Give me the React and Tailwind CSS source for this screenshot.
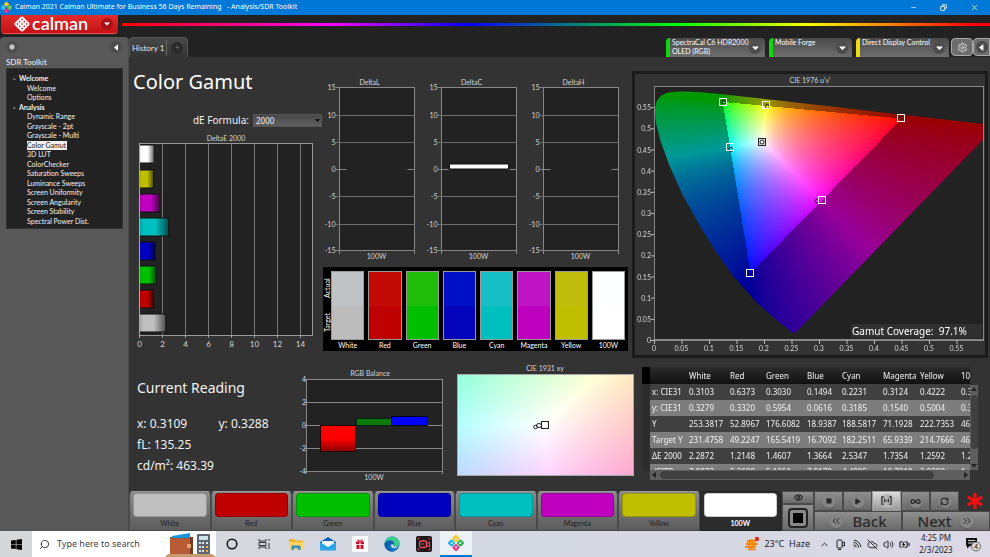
import React, { useEffect, useRef } from "react";
import {
  ChevronUp, ChevronsLeft, ChevronsRight, Search, Settings, RefreshCw, Infinity as InfinityIcon,
  Square, Play, Wifi, CloudOff, Volume2, BatteryCharging, Eye, Minus, X, Copy,
} from "lucide-react";

const UI = "font-['Noto_Sans',sans-serif]";

/* ---------- colour science helpers for the chromaticity charts ---------- */

const LOCUS_XY = [
  [0.1741, 0.005], [0.1714, 0.0051], [0.1644, 0.0109], [0.1566, 0.0177], [0.144, 0.0297],
  [0.1241, 0.0578], [0.1096, 0.0868], [0.0913, 0.1327], [0.0687, 0.2007], [0.0454, 0.295],
  [0.0235, 0.4127], [0.0082, 0.5384], [0.0039, 0.6548], [0.0139, 0.7502], [0.0389, 0.812],
  [0.0743, 0.8338], [0.1142, 0.8262], [0.1547, 0.8059], [0.2296, 0.7543], [0.3016, 0.6923],
  [0.3731, 0.6245], [0.4441, 0.5547], [0.5125, 0.4866], [0.5752, 0.4242], [0.627, 0.3725],
  [0.6658, 0.334], [0.6915, 0.3083], [0.719, 0.2809], [0.7347, 0.2653],
];

const PLOT = { x: 654, y: 86, w: 330, h: 254 };
const toX = (u) => PLOT.x + (u / 0.6) * PLOT.w;
const toY = (v) => PLOT.y + PLOT.h - (v / 0.6) * PLOT.h;

const locusPoints = LOCUS_XY.map(([x, y]) => {
  const d = -2 * x + 12 * y + 3;
  return `${toX((4 * x) / d).toFixed(2)},${toY((9 * y) / d).toFixed(2)}`;
}).join(" ");

function xyToRgb(x, y, gamma) {
  const X = x / y;
  const Z = (1 - x - y) / y;
  const rgb = [
    3.2406 * X - 1.5372 - 0.4986 * Z,
    -0.9689 * X + 1.8758 + 0.0415 * Z,
    0.0557 * X - 0.204 + 1.057 * Z,
  ];
  const outside = Math.min(...rgb) < 0;
  const top = Math.max(...rgb);
  const scale = outside ? 153 : 255;
  return rgb.map((c) => Math.pow(Math.max(c, 0) / top, 1 / gamma) * scale);
}

function Chromaticity({ width, height, locate, gamma }) {
  const ref = useRef(null);
  useEffect(() => {
    const ctx = ref.current.getContext("2d");
    const image = ctx.createImageData(width, height);
    for (let j = 0; j < height; j++) {
      for (let i = 0; i < width; i++) {
        const [x, y] = locate((i + 0.5) / width, 1 - (j + 0.5) / height);
        const [r, g, b] = xyToRgb(x, y, gamma);
        image.data.set([r, g, b, 255], (j * width + i) * 4);
      }
    }
    ctx.putImageData(image, 0, 0);
  }, [width, height, locate, gamma]);
  return <canvas ref={ref} width={width} height={height} className="block h-full w-full" />;
}

const locateUv = (s, t) => {
  const u = s * 0.6;
  const v = t * 0.6;
  const d = 6 * u - 16 * v + 12;
  return [(9 * u) / d, (4 * v) / d];
};
const locateXy = (s, t) => [0.2707 + s * 0.084, 0.287 + t * 0.084];

/* ---------- top chrome ---------- */

function CalmanMark({ className }) {
  return (
    <svg viewBox="0 0 20 20" className={className}>
      <g transform="rotate(45 10 10)">
        <rect x="2" y="2" width="7.5" height="7.5" rx="2" fill="#f5c518" />
        <rect x="10.5" y="2" width="7.5" height="7.5" rx="2" fill="#6cc644" />
        <rect x="2" y="10.5" width="7.5" height="7.5" rx="2" fill="#2ec4e8" />
        <rect x="10.5" y="10.5" width="7.5" height="7.5" rx="2" fill="#e8308a" />
      </g>
    </svg>
  );
}

function TitleBar() {
  return (
    <header className={`flex h-[15px] items-center bg-[#0078d7] pl-px text-[7px] text-white ${UI}`}>
      <CalmanMark className="mr-[3px] size-[11px]" />
      <span className="flex-1 whitespace-pre">Calman 2021 Calman Ultimate for Business 56 Days Remaining   - Analysis/SDR Toolkit</span>
      <button aria-label="Minimize" className="flex w-[30px] justify-center"><Minus size={7} strokeWidth={2} /></button>
      <button aria-label="Restore" className="flex w-[30px] justify-center"><Copy size={7} strokeWidth={3} className="-scale-x-100" /></button>
      <button aria-label="Close" className="flex w-[32px] justify-center"><X size={9} strokeWidth={2} /></button>
    </header>
  );
}

function BrandRow() {
  return (
    <div className="flex h-[22px] items-start bg-[#222]">
      <button className="ml-px flex h-[19px] w-[117px] items-center rounded-b border-b border-[#ff8080]/50 bg-linear-to-b from-[#e02b2b] to-[#c40f14] pl-[13px] text-white">
        <svg viewBox="0 0 30 30" className="size-[16px]" fill="none" stroke="white" strokeWidth="2.2">
          <g transform="rotate(45 15 15)">
            {[6, 12, 18].map((cy) => [6, 12, 18].map((cx) => <circle key={`${cx}-${cy}`} cx={cx + 3} cy={cy + 3} r="2.7" />))}
            <rect x="5" y="5" width="20" height="20" rx="3" />
          </g>
        </svg>
        <span className="ml-[2px] pb-[2px] font-['Lato',sans-serif] text-[18px] font-semibold leading-[16px]">calman</span>
        <span className="ml-auto mr-[5px] flex size-[12px] items-center justify-center rounded-full bg-[#a81015]">
          <svg viewBox="0 0 6 4" className="w-[6px]"><path d="M0 .5h6L3 3.5z" fill="white" /></svg>
        </span>
      </button>
      <div className="ml-1 mt-2 h-[3px] flex-1 bg-[linear-gradient(90deg,#f00_0%,#f0f_24%,#00f_40%,#0f0_64%,#ff0_79%,#f00_98%)]" />
    </div>
  );
}

const TREE = [
  ["Welcome", 0], ["Welcome", 1], ["Options", 1], ["Analysis", 0], ["Dynamic Range", 1], ["Grayscale - 2pt", 1],
  ["Grayscale - Multi", 1], ["Color Gamut", 1, true], ["3D LUT", 1], ["ColorChecker", 1], ["Saturation Sweeps", 1],
  ["Luminance Sweeps", 1], ["Screen Uniformity", 1], ["Screen Angularity", 1], ["Screen Stability", 1], ["Spectral Power Dist.", 1],
];

function Sidebar() {
  return (
    <aside className="w-[129px] shrink-0 rounded-t border-r border-[#4a4a4a] bg-[#585858] px-[6px] pt-[3px] text-[#f2f2f2]">
      <div className="flex h-[14px] items-center justify-between">
        <button aria-label="Options" className="flex size-[12px] items-center justify-center rounded-full bg-radial from-[#ccc] from-20% to-[#4d4d4d] to-40%" />
        <button aria-label="Collapse" className="flex size-[12px] items-center justify-center rounded-full bg-[#4b4b4b]">
          <svg viewBox="0 0 5 8" className="h-[7px]"><path d="M5 0v8L0 4z" fill="white" /></svg>
        </button>
      </div>
      <h2 className="mt-[2px] h-[12px] text-[8px] leading-[12px]">SDR Toolkit</h2>
      <ul className="grid h-[161px] w-[117px] auto-rows-fr border border-[#333] bg-[#222] pb-[2px] pt-[5px] text-[7px] leading-none">
        {TREE.map(([label, depth, active], i) => (
          <li key={i} className={depth ? "flex items-center pl-[20px]" : "flex items-center pl-[6px] font-bold"}>
            {!depth && <span className="mr-1 w-[2px] text-[5px] text-[#777]">▴</span>}
            <a href="#" className={active ? "bg-[#f0f0f0] py-px pr-px text-[#222]" : ""}>{label}</a>
          </li>
        ))}
      </ul>
    </aside>
  );
}

function Device({ lines, color, width }) {
  return (
    <button className={`flex h-[19px] shrink-0 items-start rounded-t-sm border-l-4 bg-linear-to-b from-[#4a4a4a] to-[#6e6e6e] pl-[2px] text-left text-[7px] leading-[9px] text-white ${color} ${width}`}>
      <span className="flex-1 whitespace-nowrap">{lines.map((l) => <span key={l} className="block">{l}</span>)}</span>
      <span className="mr-1 mt-1 flex size-[12px] items-center justify-center rounded-full bg-[#4c4c4c]">
        <svg viewBox="0 0 6 4" className="w-[7px]"><path d="M0 .5h6L3 3.5z" fill="white" /></svg>
      </span>
    </button>
  );
}

function TabStrip() {
  return (
    <div className="flex h-[20px] items-end justify-between overflow-hidden bg-[#222]">
      <div className="flex h-full items-center rounded-t border border-b-0 border-[#555] bg-linear-to-b from-[#484848] to-[#333] text-[8px] text-[#e6e6e6]">
        <button className="h-[16px] border-r border-[#666] pl-[2px] pr-[2px]">History 1</button>
        <button aria-label="Add tab" className="mx-1 size-[12px] rounded-full bg-[#2b2b2b] text-[7px] leading-none text-[#888]">+</button>
      </div>
      <div className="flex h-[19px] items-start">
        <div className="flex gap-1">
          <Device lines={["SpectraCal C6 HDR2000", "OLED (RGB)"]} color="border-l-[#12d512]" width="w-[99px]" />
          <Device lines={["Mobile Forge"]} color="border-l-[#12d512]" width="w-[83px]" />
          <Device lines={["Direct Display Control"]} color="border-l-[#ecdc14]" width="w-[93px]" />
        </div>
        <button aria-label="Settings" className="ml-[2px] flex h-[18px] w-[22px] items-center justify-center rounded-sm border border-[#aaa] bg-[#6d6d6d] text-[#e0e0e0]"><Settings size={11} /></button>
        <button aria-label="Show panel" className="flex h-[18px] w-[17px] items-center justify-center rounded-l-sm border border-[#aaa] bg-[#6d6d6d]">
          <span className="flex size-[12px] items-center justify-center rounded-full bg-[#4b4b4b]"><svg viewBox="0 0 5 8" className="h-[7px]"><path d="M5 0v8L0 4z" fill="white" /></svg></span>
        </button>
      </div>
    </div>
  );
}

/* ---------- charts ---------- */

const label = "fill-[#d6d6d6] font-['Lato',sans-serif] text-[7px]";

const DELTA_E = [
  ["#ffffff", 1.27, 145], ["#bfbf00", 1.22, 170], ["#c000c0", 1.74, 194], ["#00bfbf", 2.53, 218],
  ["#0000c4", 1.37, 242], ["#00c000", 1.46, 266], ["#c00000", 1.21, 290], ["#bfbfbf", 2.29, 314],
];

function DeltaEChart() {
  return (
    <svg viewBox="129 130 194 222" className="block w-full" role="img" aria-label="DeltaE 2000">
      <defs>
        <linearGradient id="edge">
          <stop offset="0" stopColor="#000" stopOpacity=".15" /><stop offset=".15" stopColor="#000" stopOpacity="0" />
          <stop offset=".55" stopColor="#000" stopOpacity="0" /><stop offset="1" stopColor="#000" stopOpacity=".6" />
        </linearGradient>
      </defs>
      <text x="226" y="141" textAnchor="middle" className={label}>DeltaE 2000</text>
      <rect x="139.5" y="143.5" width="173" height="192" fill="#222" stroke="#999" />
      {[2, 4, 6, 8, 10, 12, 14].map((n) => <line key={n} x1={139.5 + n * 11.5} x2={139.5 + n * 11.5} y1="144" y2="335" stroke="#777" />)}
      {[0, 2, 4, 6, 8, 10, 12, 14].map((n) => (
        <g key={n}>
          <line x1={139.5 + n * 11.5} x2={139.5 + n * 11.5} y1="335" y2="338" stroke="#999" />
          <text x={139.5 + n * 11.5} y="347" textAnchor="middle" className="fill-[#d6d6d6] font-['Lato',sans-serif] text-[8px]">{n}</text>
        </g>
      ))}
      {DELTA_E.map(([fill, value, y]) => (
        <g key={y}>
          <rect x="139.5" y={y} width={value * 11.5} height="18" fill={fill} />
          <rect x="139.5" y={y} width={value * 11.5} height="18" fill="url(#edge)" stroke="#111" />
        </g>
      ))}
      <line x1="139.5" x2="139.5" y1="143" y2="338" stroke="#aaa" />
    </svg>
  );
}

function DeltaCharts() {
  const rows = [[15, 87], [10, 115], [5, 142], [0, 169], [-5, 196], [-10, 224], [-15, 250]];
  return (
    <svg viewBox="323 75 309 188" className="block w-full" role="img" aria-label="DeltaL, DeltaC and DeltaH">
      {["DeltaL", "DeltaC", "DeltaH"].map((title, i) => {
        const x = 339.5 + i * 102;
        return (
          <g key={title}>
            <text x={x + 30} y="85" textAnchor="middle" className={label}>{title}</text>
            <rect x={x} y="87.5" width="75" height="163" fill="#222" stroke="#888" />
            {rows.map(([n, y]) => (
              <g key={n}>
                <line x1={x - 4} x2={n === 0 ? x + 7 : x + 75} y1={y + 0.5} y2={y + 0.5} stroke={n === 0 || n === -15 || n === 15 ? "#888" : "#6e6e6e"} />
                <text x={x - 4} y={y + 3} textAnchor="end" className={label}>{n}</text>
              </g>
            ))}
            <line x1={x + 68} x2={x + 75} y1="169.5" y2="169.5" stroke="#888" />
            {title === "DeltaC" && <rect x={x + 8} y="164" width="59" height="5" fill="#fff" stroke="#111" />}
            <path d={`M${x} 251v3M${x + 75} 251v3`} stroke="#888" />
            <text x={x + 37} y="259" textAnchor="middle" className={label}>100W</text>
          </g>
        );
      })}
    </svg>
  );
}

const SWATCHES = [
  ["White", "bg-[#bfc3c5]", "bg-[#bcbcbc]"], ["Red", "bg-[#c40a04]", "bg-[#bf0000]"], ["Green", "bg-[#22bf0a]", "bg-[#00bf00]"],
  ["Blue", "bg-[#0010c4]", "bg-[#0404bb]"], ["Cyan", "bg-[#16bfc5]", "bg-[#00bfbf]"], ["Magenta", "bg-[#bf14c4]", "bg-[#bf00bf]"],
  ["Yellow", "bg-[#c1bd0c]", "bg-[#bfbf00]"], ["100W", "bg-[#fcffff]", "bg-[#ffffff]"],
];

function SwatchPanel() {
  return (
    <div className="mr-1 mt-1 flex h-[84px] bg-black pr-[3px] pt-1 text-[7px] text-white">
      <div className="flex h-[68px] w-2 rotate-180 flex-row justify-around text-center leading-[8px] [writing-mode:vertical-rl]">
        <span>Target</span><span>Actual</span>
      </div>
      <div className="grid flex-1 grid-cols-8 gap-1">
        {SWATCHES.map(([name, actual, target]) => (
          <div key={name} className="text-center leading-[11px]">
            <div className="flex h-[69px] flex-col border border-[#999]">
              <span className={`flex-1 ${actual}`} /><span className={`flex-1 ${target}`} />
            </div>
            {name}
          </div>
        ))}
      </div>
    </div>
  );
}

const MARKS = [[723, 102, 724, 102], [766, 105, 767.5, 106.5], [901.5, 118.5, 900, 118], [730, 147.5, 731, 149.5], [822, 200, 817, 201], [750, 273, 748, 271]];
const STEPS = [0, 0.05, 0.1, 0.15, 0.2, 0.25, 0.3, 0.35, 0.4, 0.45, 0.5, 0.55];

function Cie1976() {
  return (
    <div className="mr-[2px] mt-[14px] border-[3px] border-[#1b1b1b]">
      <svg viewBox="635 74 350 281" className="block w-full" role="img" aria-label="CIE 1976 u'v'">
        <clipPath id="locus"><polygon points={locusPoints} /></clipPath>
        <clipPath id="plot"><rect x={PLOT.x} y={PLOT.y} width={PLOT.w} height={PLOT.h} /></clipPath>
        <text x="810" y="83" textAnchor="middle" className={label}>CIE 1976 u'v'</text>
        <rect x="654.5" y="86.5" width="329" height="253" fill="#222" stroke="#888" />
        <g clipPath="url(#plot)">
          <g clipPath="url(#locus)">
            <foreignObject x={PLOT.x} y={PLOT.y} width={PLOT.w} height={PLOT.h}>
              <Chromaticity width={330} height={254} locate={locateUv} gamma={1.5} />
            </foreignObject>
          </g>
        </g>
        <path d="M654.5 86v257M654 340.5h330M983.5 86v254" stroke="#888" fill="none" />
        {STEPS.map((n) => (
          <g key={n}>
            <line x1={toX(n) + 0.5} x2={toX(n) + 0.5} y1="340" y2="344" stroke="#bbb" />
            <line x1="651" x2="654" y1={toY(n) + 0.5} y2={toY(n) + 0.5} stroke="#bbb" />
            <text x={toX(n)} y="351" textAnchor="middle" className={label}>{n}</text>
            <text x="651" y={toY(n) + 3} textAnchor="end" className={label}>{n}</text>
          </g>
        ))}
        <rect x="851" y="324" width="131" height="14" fill="#303030" />
        <text x="852" y="335" className="fill-white font-['Noto_Sans',sans-serif] text-[10px] whitespace-pre">Gamut Coverage:  97.1%</text>
        {MARKS.map(([x, y, cx, cy]) => (
          <g key={x} fill="none">
            <circle cx={cx} cy={cy} r="2" stroke="#222" />
            <rect x={Math.floor(x) - 3.5} y={Math.floor(y) - 3.5} width="7" height="7" stroke="#f4f4f4" />
          </g>
        ))}
        <rect x="758.5" y="138.5" width="7" height="7" fill="#ddd" stroke="#222" />
        <circle cx="762" cy="142" r="2" fill="#fff" stroke="#222" />
      </svg>
    </div>
  );
}

function RgbBalance() {
  return (
    <svg viewBox="300 358 152 130" className="block w-full" role="img" aria-label="RGB Balance">
      <defs>
        <linearGradient id="redbar" x2="0" y2="1"><stop offset=".5" stopColor="#f00" /><stop offset="1" stopColor="#800" /></linearGradient>
      </defs>
      <text x="370" y="376" textAnchor="middle" className={label}>RGB Balance</text>
      <rect x="306.5" y="379.5" width="136" height="92" fill="#222" stroke="#888" />
      {[4, 2, 0, -2, -4].map((n, i) => (
        <g key={n}>
          <line x1="304" x2="442" y1={379.5 + i * 23} y2={379.5 + i * 23} stroke="#888" />
          <text x="306" y={382 + i * 23} textAnchor="end" className={label}>{n}</text>
        </g>
      ))}
      <path d="M306.5 471v3M442.5 471v3" stroke="#888" />
      <rect x="320.5" y="425.5" width="35" height="26" fill="url(#redbar)" stroke="#200" />
      <rect x="356.5" y="418.5" width="35" height="7" fill="#0a7a0a" stroke="#021" />
      <rect x="391.5" y="416.5" width="36" height="9" fill="#00f" stroke="#002" />
      <text x="374" y="480" textAnchor="middle" className={label}>100W</text>
    </svg>
  );
}

function Cie1931() {
  return (
    <svg viewBox="452 358 184 130" className="block w-full" role="img" aria-label="CIE 1931 xy">
      <text x="545" y="371" textAnchor="middle" className={label}>CIE 1931 xy</text>
      <foreignObject x="457" y="374" width="177" height="102">
        <Chromaticity width={177} height={102} locate={locateXy} gamma={2.2} />
      </foreignObject>
      <rect x="457.5" y="374.5" width="176" height="101" fill="none" stroke="#aaa" />
      <g fill="none" stroke="#222">
        <circle cx="535.5" cy="427" r="1.8" /><ellipse cx="539" cy="425.5" rx="2.5" ry="2" />
        <rect x="541.5" y="421.5" width="7" height="7" />
      </g>
    </svg>
  );
}

const COLUMNS = ["", "White", "Red", "Green", "Blue", "Cyan", "Magenta", "Yellow", "100W"];
const READINGS = [
  ["x: CIE31", "0.3103", "0.6373", "0.3030", "0.1494", "0.2231", "0.3124", "0.4222", "0.3109"],
  ["y: CIE31", "0.3279", "0.3320", "0.5954", "0.0616", "0.3185", "0.1540", "0.5004", "0.3288"],
  ["Y", "253.3817", "52.8967", "176.6082", "18.9387", "188.5817", "71.1928", "222.7353", "463.39"],
  ["Target Y", "231.4758", "49.2247", "165.5419", "16.7092", "182.2511", "65.9339", "214.7666", "463.39"],
  ["ΔE 2000", "2.2872", "1.2148", "1.4607", "1.3664", "2.5347", "1.7354", "1.2592", "1.27"],
  ["dEITP", "7.9872", "5.2689", "5.1261", "7.9179", "4.4985", "10.7019", "3.9388", "1."],
];
const WIDTHS = ["w-[37px]", "w-[41px]", "w-[36px]", "w-[41px]", "w-[35px]", "w-[41px]", "w-[37px]", "w-[41px]", "w-[40px]"];

function DataTable() {
  return (
    <div className={`ml-[6px] mr-[12px] mt-[9px] flex min-w-0 items-start text-[8px] text-[#f2f2f2] ${UI}`}>
      <div className="w-2 shrink-0 bg-[#2c2c2c]"><div className="h-[17px] bg-black" /><div className="h-[86px]" /></div>
      <div className="min-w-0 flex-1">
        <div className="h-[103px] overflow-hidden">
          <table className="w-[349px] table-fixed border-collapse whitespace-nowrap text-left">
            <thead>
              <tr className="h-[17px] bg-linear-to-b from-[#2c2c2c] to-[#111]">
                {COLUMNS.map((c, i) => <th key={i} scope="col" className={`p-0 pl-[2px] font-normal ${WIDTHS[i]}`}>{c}</th>)}
              </tr>
            </thead>
            <tbody>
              {READINGS.map((row) => (
                <tr key={row[0]} className="h-[16px] odd:bg-[#404040] even:bg-[#7d7d7d]">
                  {row.map((v, i) => (i ? <td key={i} className="p-0 pl-[2px]">{v}</td> : <th key={i} scope="row" className="p-0 pl-[2px] font-normal">{v}</th>))}
                </tr>
              ))}
            </tbody>
          </table>
        </div>
        <div className="flex h-[10px] items-center bg-[#5e5e5e] px-[2px]">
          <svg viewBox="0 0 4 6" className="h-[6px]"><path d="M4 0v6L0 3z" fill="#222" /></svg>
          <div className="ml-1 h-2 w-[274px] rounded-full bg-[#404040]" />
          <svg viewBox="0 0 4 6" className="ml-auto h-[6px]"><path d="M0 0v6l4-3z" fill="#222" /></svg>
        </div>
      </div>
      <div className="mt-[18px] flex h-[85px] w-2 shrink-0 flex-col items-center justify-between bg-[#5e5e5e] py-[2px]">
        <svg viewBox="0 0 6 4" className="w-[6px]"><path d="M0 4h6L3 0z" fill="#222" /></svg>
        <div className="mb-auto mt-1 h-[54px] w-[7px] rounded-full bg-[#404040]" />
        <svg viewBox="0 0 6 4" className="w-[6px]"><path d="M0 0h6L3 4z" fill="#222" /></svg>
      </div>
    </div>
  );
}

function CurrentReading() {
  return (
    <section className={`min-w-0 pl-2 pt-[20px] text-[12px] leading-[21px] text-[#f2f2f2] ${UI}`}>
      <h2 className="mb-[15px] text-[14px] leading-[20px]">Current Reading</h2>
      <div className="grid grid-cols-2"><p>x: 0.3109</p><p>y: 0.3288</p></div>
      <p>fL: 135.25</p>
      <p>cd/m²: 463.39</p>
    </section>
  );
}

/* ---------- pattern and transport bar ---------- */

const PATTERNS = [
  ["White", "bg-[#bfbfbf]"], ["Red", "bg-[#bf0000]"], ["Green", "bg-[#00bf00]"], ["Blue", "bg-[#0000bf]"],
  ["Cyan", "bg-[#00bfbf]"], ["Magenta", "bg-[#bf00bf]"], ["Yellow", "bg-[#bfbf00]"], ["100W", "bg-white", true],
];

const key = "flex items-center justify-center border border-[#4a4a4a] bg-linear-to-b from-[#8f8f8f] to-[#6a6a6a] text-[#2a2a2a]";
const knob = "flex size-[14px] items-center justify-center rounded-full bg-[#858585] shadow";

function PatternBar() {
  return (
    <div className="mt-auto flex h-[40px]">
      <div className="grid flex-1 grid-cols-8">
        {PATTERNS.map(([name, color, active]) => (
          <button
            key={name}
            className={active
              ? "rounded-t-sm border border-[#222] bg-[#2c2c2c] px-[3px] text-[7px] font-bold leading-[12px] text-white"
              : "rounded-t-sm border border-[#4a4a4a] border-t-[#999] bg-linear-to-b from-[#8a8a8a] to-[#5c5c5c] px-[3px] text-[7px] leading-[12px] text-[#1f1f1f]"}
          >
            <span className={`block h-[24px] rounded-sm border border-black/20 ${color}`} />
            {name}
          </button>
        ))}
      </div>
      <div className="flex w-[33px] flex-col border-l border-[#333]">
        <button aria-label="Preview" className={`${key} h-[13px]`}><Eye size={9} strokeWidth={3} /></button>
        <button aria-label="Pattern window" className={`${key} flex-1`}>
          <span className="flex size-[20px] items-center justify-center rounded-sm border-2 border-[#222] bg-[#888]"><span className="size-[10px] bg-black" /></span>
        </button>
      </div>
      <div className="flex w-[176px] flex-col">
        <div className="flex h-[20px]">
          <button aria-label="Stop" className={`${key} w-[29px]`}><span className={knob}><Square size={6} fill="currentColor" /></span></button>
          <button aria-label="Play" className={`${key} w-[29px]`}><span className={knob}><Play size={7} fill="currentColor" /></span></button>
          <button aria-label="Read series" className="flex w-[29px] items-center justify-center border border-[#999] bg-linear-to-b from-[#ddd] to-[#999]">
            <span className="flex size-[14px] items-center justify-center rounded-full bg-[#b5b5b5]">
              <svg viewBox="0 0 12 10" className="w-[11px]" fill="none" stroke="#222" strokeWidth="1.2"><path d="M3 1H1v8h2M9 1h2v8H9M4 3v4M8 3v4M5.500 5h1" /></svg>
            </span>
          </button>
          <button aria-label="Continuous" className={`${key} w-[29px]`}><span className={knob}><InfinityIcon size={11} strokeWidth={3} /></span></button>
          <button aria-label="Refresh" className={`${key} w-[29px]`}><span className={knob}><RefreshCw size={9} strokeWidth={3} /></span></button>
          <div className="flex flex-1 items-center justify-center">
            <svg viewBox="0 0 20 20" className="size-[18px]" stroke="#f01010" strokeWidth="3.6"><path d="M10 1v18M2 5.5l16 9M18 5.5l-16 9" /></svg>
          </div>
        </div>
        <div className={`flex h-[20px] text-[15px] font-medium leading-none ${UI}`}>
          <button className={`${key} flex-1 gap-[9px]`}><span className={knob}><ChevronsLeft size={12} /></span>Back</button>
          <button className={`${key} flex-1 gap-[9px]`}>Next<span className={knob}><ChevronsRight size={12} /></span></button>
        </div>
      </div>
    </div>
  );
}

/* ---------- Windows task bar ---------- */

function TaskIcon({ name, children, active }) {
  return (
    <button aria-label={name} className={active ? "flex w-8 items-center justify-center border-b-2 border-[#0078d7] bg-[#eef1f5]" : "flex w-8 items-center justify-center"}>
      <svg viewBox="0 0 16 16" className="size-[16px]">{children}</svg>
    </button>
  );
}

function TaskBar() {
  return (
    <footer className={`flex h-[26px] items-stretch bg-linear-to-r from-[#d6d7da] via-[#d3d8e3] to-[#dcd8e6] text-[#1b1b1b] ${UI}`}>
      <button aria-label="Start" className="flex w-8 items-center justify-center">
        <svg viewBox="0 0 12 12" className="size-[11px]"><path d="M0 1.7 5.2 1v4.6H0zM5.9.9 12 0v5.6H5.9zM0 6.3h5.2v4.7L0 10.3zM5.9 6.3H12V12l-6.1-.9z" /></svg>
      </button>
      <label className="flex w-[184px] items-center bg-white pl-[7px]">
        <Search size={11} strokeWidth={1.8} className="-scale-x-100" />
        <input aria-label="Search" placeholder="Type here to search" className="ml-[7px] w-[108px] bg-transparent text-[9px] outline-none placeholder:text-[#444]" />
        <svg viewBox="0 0 51 25" className="h-[25px] w-[51px]">
          <path d="M0 25l3-3h44l4 3z" fill="#c89a70" />
          <path d="M5 5h22v17H5z" fill="#a9502c" /><path d="M7 4l18-3v5H7z" fill="#1a95d8" /><path d="M5 7h20v15H5z" fill="#b85c35" /><path d="M25 5h3v17h-3z" fill="#7e371d" />
          <path d="M22 12h4v4h-4z" fill="#e0a070" />
          <rect x="32" y="2" width="13" height="20" rx="1" fill="#5d6570" /><rect x="34" y="4" width="9" height="4" fill="#cfe0e8" />
          {[10, 14, 18].map((y) => [34, 37, 41].map((x) => <rect key={`${x}${y}`} x={x} y={y} width="2" height="2" fill={x === 41 && y > 12 ? "#f5b041" : "#dfe4e8"} />))}
        </svg>
      </label>
      <TaskIcon name="Cortana"><circle cx="8" cy="8" r="4.8" fill="none" stroke="#111" strokeWidth="1.5" /></TaskIcon>
      <TaskIcon name="Task view"><path d="M3 3v2h7V3M3 13v-2h7v2M3 6.5h7v3H3zM13 3v2M13 7v6" fill="none" stroke="#333" /></TaskIcon>
      <TaskIcon name="File Explorer"><path d="M1 3h5l1.5 1.5H15V13H1z" fill="#f0b429" /><path d="M1 6h14v7.5H1z" fill="#ffd35c" /><path d="M3.5 14V9.5h9V14h-2.5v-2H6v2z" fill="#2f8ed8" /></TaskIcon>
      <TaskIcon name="Mail"><path d="M0 6l8-5 8 5v8H0z" fill="#0a64ad" /><path d="M2 5h12v6H2z" fill="#fff" /><path d="M0 6l8 5 8-5v8.500H0z" fill="#2aa5e8" /></TaskIcon>
      <TaskIcon name="Gifts"><path d="M0 0h16v16H0z" fill="#fff" /><path d="M4 5.500h3.500V8H4zM8.500 5.500H12V8H8.500zM4.500 8.700h3V13h-3zM8.500 8.700h3V13h-3z" fill="#c8102e" /><path d="M8 5.500C4 5 5.500 2 8 5.500 10.500 2 12 5 8 5.500" fill="none" stroke="#c8102e" /></TaskIcon>
      <TaskIcon name="Edge">
        <circle cx="8" cy="8" r="7.600" fill="#1479c9" /><path d="M.5 8C1 3.500 4 .4 8 .4c4.500 0 7.600 3 7.600 6.600 0 2.500-2 3.700-4 3.700-1.800 0-2.600-.8-2-1.700C11 7 9 4.500 6 4.500 3.500 4.500 1 6 .5 8z" fill="#3bc98f" /><path d="M.5 8C1 6 3.500 4.500 6 4.500c3 0 4.300 2.500 3 4-1-1.500-4-1-4 1.500 0 3 3 5.500 6 5-5 2-10.500-1.500-10.500-7z" fill="#0f5fae" /><path d="M6.800 9c1-1 2.400-.8 2.700 0-.6.900.2 1.700 2 1.700 1.200 0 2.300-.4 3-1-1 3.300-7.500 3.500-7.700-.7z" fill="#d3d8e0" />
      </TaskIcon>
      <TaskIcon name="Recorder"><rect width="16" height="16" rx="2" fill="#181818" /><rect x="3.500" y="5" width="7" height="6.500" rx="1.500" fill="none" stroke="#ff4560" strokeWidth="1.300" /><path d="M10.500 8l3-2v5l-3-2M5 8h3" stroke="#ff4560" fill="none" /><path d="M2 4V2h2M14 4V2h-2M2 12v2h2M14 12v2h-2" stroke="#ff4560" fill="none" strokeWidth=".7" /></TaskIcon>
      <TaskIcon name="Calman" active>
        <g transform="rotate(45 8 8)">
          <rect x="2" y="2" width="5.600" height="5.600" rx="1" fill="#f5c518" /><rect x="8.400" y="2" width="5.600" height="5.600" rx="1" fill="#28b84c" />
          <rect x="2" y="8.400" width="5.600" height="5.600" rx="1" fill="#19b5e8" /><rect x="8.400" y="8.400" width="5.600" height="5.600" rx="1" fill="#e8308a" />
          <circle cx="5" cy="5" r="1" fill="#fff" /><circle cx="11" cy="5" r="1" fill="#fff" /><circle cx="5" cy="11" r="1" fill="#fff" /><circle cx="11" cy="11" r="1" fill="#fff" />
        </g>
      </TaskIcon>
      <div className="ml-auto flex items-center pr-2">
        <button className="mr-[9px] flex items-center gap-1 text-[9px]">
          <svg viewBox="0 0 16 16" className="size-[16px]"><circle cx="7.500" cy="8" r="5" fill="#f7a31a" /><path d="M2 8h12M1 11h11M4 13.500h8M3 5h8" stroke="#ee7d12" strokeWidth="1.500" /><circle cx="13" cy="3" r="2.200" fill="#d92d20" /></svg>
          <span className="whitespace-pre">23°C  Haze</span>
        </button>
        <div className="flex items-center gap-[5px]">
          <ChevronUp size={11} strokeWidth={2} />
          <svg viewBox="0 0 11 11" className="size-[11px]" fill="none" stroke="#222"><rect x="2" y="1" width="5" height="8" rx="1" /><path d="M3 10.500h3M7 4l2.500-1v4L7 6" /></svg>
          <Wifi size={11} strokeWidth={2} className="rotate-45" />
          <CloudOff size={11} strokeWidth={2} />
          <Volume2 size={11} strokeWidth={2} />
          <BatteryCharging size={11} strokeWidth={2.500} />
        </div>
        <div className="ml-[8px] w-[36px] whitespace-nowrap text-center text-[8px] leading-[12px]"><p>4:25 PM</p><p>2/3/2023</p></div>
        <button aria-label="4 notifications" className="ml-[10px]">
          <svg viewBox="0 0 18 16" className="h-[16px] w-[18px]"><path d="M2 2h11v8H6l-3 2.500V10H2z" fill="#111" /><path d="M4 4.500h7M4 7h7" stroke="#ddd" /><circle cx="12" cy="10.500" r="4.500" fill="#ddd" stroke="#666" /><text x="12" y="13" textAnchor="middle" className="fill-[#111] text-[7px]">4</text></svg>
        </button>
      </div>
    </footer>
  );
}

export default function App() {
  return (
    <div className="flex min-h-screen flex-col bg-[#222] font-['Lato',sans-serif]">
      <TitleBar />
      <BrandRow />
      <div className="flex flex-1">
        <Sidebar />
        <main className="flex min-w-0 flex-1 flex-col bg-[#333]">
          <TabStrip />
          <div className="grid grid-cols-[194fr_309fr_358fr] items-start">
            <section>
              <h1 className={`ml-1 mt-[11px] h-[28px] whitespace-nowrap text-[20px] leading-[28px] text-white ${UI}`}>Color Gamut</h1>
              <div className={`mb-[2px] mr-px mt-[17px] flex h-[15px] items-center justify-end text-[10px] text-[#f2f2f2] ${UI}`}>
                <label htmlFor="formula" className="mr-1">dE Formula:</label>
                <div className="grid">
                  <select id="formula" className="col-start-1 row-start-1 h-[13px] w-[69px] appearance-none border border-[#555] bg-linear-to-b from-[#484848] to-[#606060] pl-[2px] text-[8px] leading-none">
                    <option>2000</option>
                  </select>
                  <svg viewBox="0 0 6 4" className="pointer-events-none col-start-1 row-start-1 mr-[2px] w-[5px] self-center justify-self-end"><path d="M0 0h6L3 4z" fill="#111" /></svg>
                </div>
              </div>
              <DeltaEChart />
            </section>
            <section className="pt-[18px]">
              <DeltaCharts />
              <SwatchPanel />
            </section>
            <Cie1976 />
          </div>
          <div className="grid grid-cols-[171fr_152fr_184fr_354fr] items-start">
            <CurrentReading />
            <RgbBalance />
            <Cie1931 />
            <DataTable />
          </div>
          <PatternBar />
        </main>
      </div>
      <TaskBar />
    </div>
  );
}
